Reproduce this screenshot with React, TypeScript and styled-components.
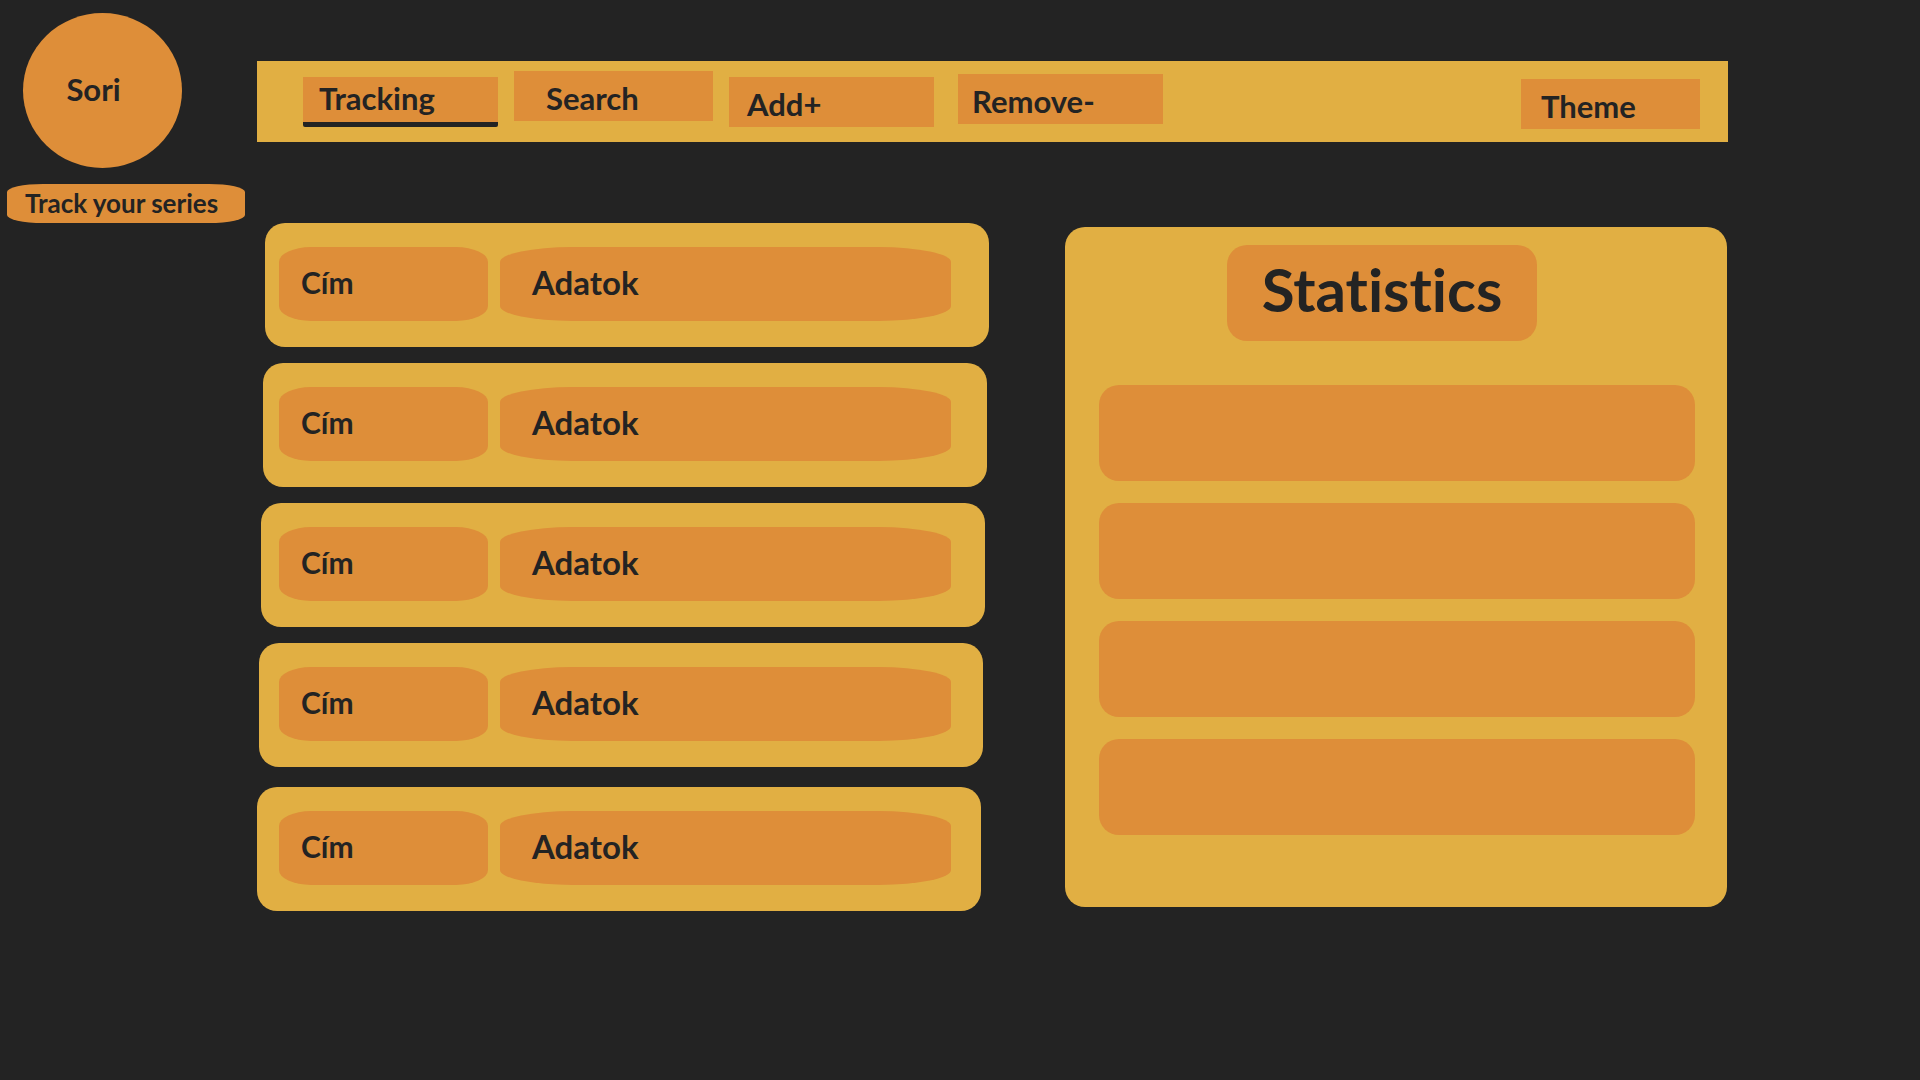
import React from "react";
import styled, { createGlobalStyle, ThemeProvider } from "styled-components";

const theme = {
  ink: "#232323",
  panel: "#e1af43",
  accent: "#de8e39",
  font: 'Candara, Lato, "Noto Sans", sans-serif',
};

const GlobalStyle = createGlobalStyle`
  * { box-sizing: border-box; }
  body {
    margin: 0;
    background: ${theme.ink};
    color: ${theme.ink};
    font-family: ${theme.font};
    font-weight: 700;
    font-variant-ligatures: none;
  }
  ul { list-style: none; margin: 0; padding: 0; }
`;

const Page = styled.div`
  display: grid;
  grid-template-columns: 257px minmax(0, 1fr);
  padding-right: 10%;
  min-height: 100vh;
`;

const Brand = styled.aside`
  display: flex;
  flex-direction: column;
  align-items: flex-start;
  gap: 16px;
  padding: 13px 12px 0 7px;
`;

const Logo = styled.a`
  display: flex;
  align-items: center;
  justify-content: center;
  width: 159px;
  height: 155px;
  margin-left: 16px;
  padding: 0 18px 4px 0;
  border-radius: 50%;
  background: ${({ theme }) => theme.accent};
  color: ${({ theme }) => theme.ink};
  font-size: 31px;
  line-height: 36px;
  text-decoration: none;
`;

const Tagline = styled.p`
  width: 100%;
  height: 39px;
  margin: 0;
  padding-left: 18px;
  border-radius: 36px / 8px;
  background: ${({ theme }) => theme.accent};
  font-size: 26px;
  line-height: 38px;
  white-space: nowrap;
`;

const Main = styled.main`
  padding-top: 61px;
`;

const NavBar = styled.nav`
  display: flex;
  align-items: flex-start;
  gap: 16px;
  height: 81px;
  padding: 0 28px 0 46px;
  background: ${({ theme }) => theme.panel};
`;

const NavButton = styled.button<{ $width: number; $drop: number; $indent: number; $gap?: string }>`
  flex: 0 1 ${({ $width }) => $width}px;
  height: 50px;
  margin: ${({ $drop }) => $drop}px 0 0 ${({ $gap }) => $gap ?? "0"};
  padding: 4px 0 0 ${({ $indent }) => $indent}px;
  border: 0;
  background: ${({ theme }) => theme.accent};
  color: inherit;
  font: inherit;
  font-size: 31px;
  line-height: 36px;
  font-variant-ligatures: none;
  text-align: left;
  cursor: pointer;

  &[aria-current="page"] {
    padding: 0 0 4px ${({ $indent }) => $indent}px;
    border-bottom: 5px solid ${({ theme }) => theme.ink};
    border-radius: 0 0 2px 2px;
  }
`;

const Columns = styled.div`
  display: grid;
  grid-template-columns: minmax(0, 732fr) minmax(0, 662fr);
  align-items: start;
  gap: 76px;
  padding: 81px 1px 0 0;
`;

const SeriesList = styled.ul`
  display: grid;
  gap: 16px;
`;

const SeriesRow = styled.li<{ $inset: number }>`
  display: grid;
  grid-template-columns: 19fr 41fr;
  gap: 12px;
  width: calc(100% - 8px);
  margin-left: ${({ $inset }) => $inset}px;
  padding: 24px ${({ $inset }) => 30 + $inset}px 26px ${({ $inset }) => 22 - $inset}px;
  border-radius: 20px;
  background: ${({ theme }) => theme.panel};

  &:last-child {
    margin-top: 4px;
  }
`;

const SeriesTitle = styled.div`
  height: 74px;
  padding-left: 22px;
  border-radius: 32px / 15px;
  background: ${({ theme }) => theme.accent};
  font-size: 30px;
  line-height: 70px;
`;

const SeriesData = styled(SeriesTitle)`
  padding-left: 32px;
  border-radius: 72px / 15px;
  font-size: 33px;
`;

const StatsPanel = styled.section`
  display: flex;
  flex-direction: column;
  align-items: center;
  gap: 44px;
  margin-top: 4px;
  padding: 18px 32px 72px 34px;
  border-radius: 20px;
  background: ${({ theme }) => theme.panel};
`;

const StatsTitle = styled.h1`
  width: 310px;
  height: 96px;
  margin: 0 30px 0 0;
  border-radius: 20px;
  background: ${({ theme }) => theme.accent};
  font-size: 60px;
  line-height: 88px;
  text-align: center;
`;

const StatsList = styled.ul`
  display: grid;
  gap: 22px;
  width: 100%;
`;

const StatsItem = styled.li`
  height: 96px;
  border-radius: 20px;
  background: ${({ theme }) => theme.accent};
`;

const navItems = [
  { label: "Tracking", width: 195, drop: 16, indent: 16, current: true },
  { label: "Search", width: 199, drop: 10, indent: 32 },
  { label: "Add+", width: 205, drop: 16, indent: 18 },
  { label: "Remove-", width: 205, drop: 13, indent: 14, gap: "8px" },
  { label: "Theme", width: 179, drop: 18, indent: 20, gap: "auto" },
];

const insets = [8, 6, 4, 2, 0];

export default function App() {
  return (
    <ThemeProvider theme={theme}>
      <GlobalStyle />
      <Page>
        <Brand>
          <Logo href="#">Sori</Logo>
          <Tagline>Track your series</Tagline>
        </Brand>
        <Main>
          <NavBar>
            {navItems.map((item) => (
              <NavButton
                key={item.label}
                type="button"
                $width={item.width}
                $drop={item.drop}
                $indent={item.indent}
                $gap={item.gap}
                aria-current={item.current ? "page" : undefined}
              >
                {item.label}
              </NavButton>
            ))}
          </NavBar>
          <Columns>
            <SeriesList>
              {insets.map((inset) => (
                <SeriesRow key={inset} $inset={inset}>
                  <SeriesTitle>Cím</SeriesTitle>
                  <SeriesData>Adatok</SeriesData>
                </SeriesRow>
              ))}
            </SeriesList>
            <StatsPanel>
              <StatsTitle>Statistics</StatsTitle>
              <StatsList>
                {[0, 1, 2, 3].map((slot) => (
                  <StatsItem key={slot} />
                ))}
              </StatsList>
            </StatsPanel>
          </Columns>
        </Main>
      </Page>
    </ThemeProvider>
  );
}
